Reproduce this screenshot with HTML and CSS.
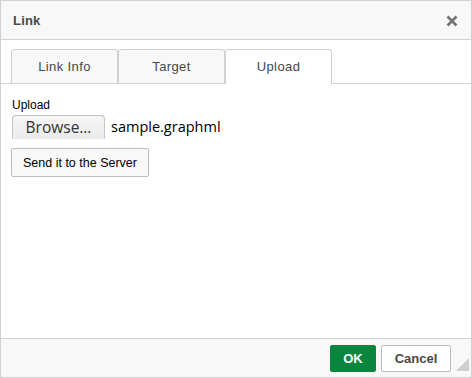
FILE: index.html
```html
<!DOCTYPE html>
<html>
<head>
	<meta charset="utf-8">
	<title>Link</title>
	<link rel="stylesheet" href="styles.css">
</head>
<body>
	<div class="dialog">
		<div class="dialog-title">
			<span class="title-text">Link</span>
			<span class="close">
				<svg width="12" height="12" viewBox="0 0 12 12"><path d="M1.5 1.5 L10.5 10.5 M10.5 1.5 L1.5 10.5" stroke="#747474" stroke-width="2.6"/></svg>
			</span>
		</div>
		<div class="dialog-contents">
			<div class="tabs">
				<a class="tab">Link Info</a>
				<a class="tab">Target</a>
				<a class="tab active">Upload</a>
			</div>
			<div class="panel">
				<div class="field-label">Upload</div>
				<div class="file-row">
					<span class="browse">Browse&hellip;</span>
					<span class="file-name">sample.graphml</span>
				</div>
				<button class="send">Send it to the Server</button>
			</div>
		</div>
		<div class="dialog-footer">
			<button class="btn btn-ok">OK</button>
			<button class="btn btn-cancel">Cancel</button>
			<span class="resizer"></span>
		</div>
	</div>
</body>
</html>
```
FILE: styles.css
```css
html, body {
	margin: 0;
	padding: 0;
}

.dialog {
	width: 472px;
	height: 378px;
	box-sizing: border-box;
	border: 1px solid #d1d1d1;
	display: flex;
	flex-direction: column;
	font-family: "Liberation Sans", Arial, sans-serif;
	color: #484848;
	background: #fff;
}

.dialog-title {
	height: 38px;
	background: #f8f8f8;
	border-bottom: 1px solid #d1d1d1;
	display: flex;
	align-items: center;
	justify-content: space-between;
	padding: 0 13px 0 12px;
}

.title-text {
	font-size: 13px;
	font-weight: bold;
	letter-spacing: 0.2px;
}

.close {
	display: flex;
	padding-top: 2px;
}

.dialog-contents {
	flex: 1;
	padding-top: 9px;
}

.tabs {
	display: flex;
	padding-left: 10px;
	border-bottom: 1px solid #d1d1d1;
	height: 34px;
}

.tab {
	width: 105px;
	height: 33px;
	line-height: 34px;
	border: 1px solid #d1d1d1;
	border-bottom: none;
	border-radius: 3px 3px 0 0;
	background: #f8f8f8;
	text-align: center;
	font-size: 13px;
	letter-spacing: 0.4px;
	color: #484848;
}

.tab.active {
	background: #fff;
	height: 34px;
}

.panel {
	padding: 14px 0 0 10px;
}

.field-label {
	font-size: 12px;
	color: #000;
	padding-left: 1px;
	line-height: 14px;
}

.file-row {
	display: flex;
	align-items: center;
	margin-top: 3px;
	margin-left: 1px;
	height: 23px;
}

.browse {
	width: 91px;
	height: 23px;
	border: 1px solid #c6c6c6;
	border-bottom: none;
	border-radius: 4px 4px 0 0;
	background: linear-gradient(#f6f6f6, #eaeaea);
	font-family: "Open Sans", "DejaVu Sans", sans-serif;
	font-size: 15.5px;
	color: #333;
	text-align: center;
	line-height: 23px;
}

.file-name {
	margin-left: 6px;
	font-family: "Open Sans", "DejaVu Sans", sans-serif;
	font-size: 14.5px;
	color: #000;
}

.send {
	display: block;
	margin-top: 10px;
	height: 29px;
	padding: 0 11px;
	border: 1px solid #bcbcbc;
	border-radius: 2px;
	background: #f8f8f8;
	font-family: "Liberation Sans", Arial, sans-serif;
	font-size: 12.5px;
	color: #000;
}

.dialog-footer {
	height: 38px;
	background: #f8f8f8;
	border-top: 1px solid #d1d1d1;
	display: flex;
	align-items: center;
	justify-content: flex-end;
	padding-right: 20px;
	position: relative;
}

.btn {
	height: 27px;
	border-radius: 2px;
	font-family: "Liberation Sans", Arial, sans-serif;
	font-size: 13px;
	font-weight: bold;
	padding: 0;
	margin-left: 5px;
}

.btn-ok {
	width: 46px;
	background: #09863e;
	border: 1px solid #09863e;
	color: #fff;
}

.btn-cancel {
	width: 70px;
	background: #fff;
	border: 1px solid #bcbcbc;
	color: #484848;
}

.resizer {
	position: absolute;
	right: 2px;
	bottom: 6px;
	width: 0;
	height: 0;
	border-left: 13px solid transparent;
	border-bottom: 13px solid #cfcfcf;
}
```
